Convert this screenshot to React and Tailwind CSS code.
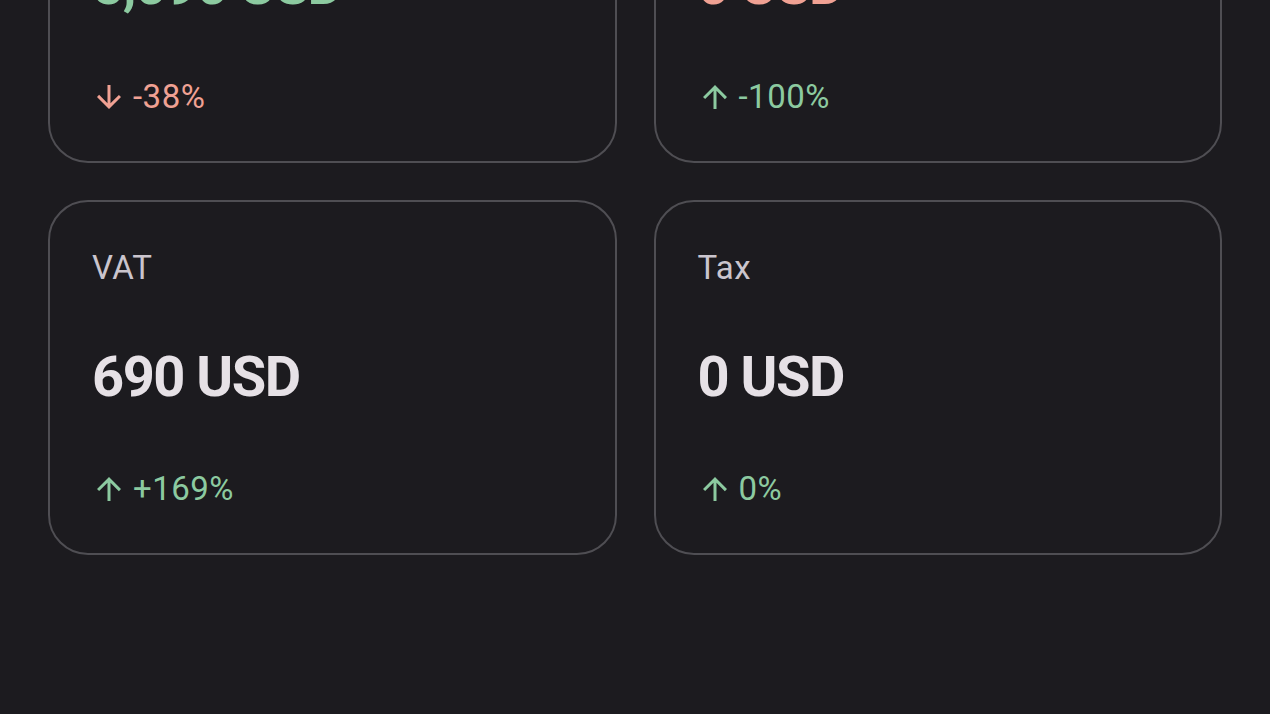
import React from "react";

const cards = [
  { label: "Income", value: "5,090 USD", valueTone: "green", delta: "-38%", dir: "down", deltaTone: "red" },
  { label: "Expenses", value: "0 USD", valueTone: "red", delta: "-100%", dir: "up", deltaTone: "green" },
  { label: "VAT", value: "690 USD", valueTone: "plain", delta: "+169%", dir: "up", deltaTone: "green" },
  { label: "Tax", value: "0 USD", valueTone: "plain", delta: "0%", dir: "up", deltaTone: "green" },
];

const toneClass = {
  green: "text-[#8ccaa0]",
  red: "text-[#f0a193]",
  plain: "text-[#e6e1e6]",
};

function Arrow({ dir }) {
  return (
    <svg viewBox="0 0 24 24" className="w-[36px] h-[36px]" fill="currentColor">
      {dir === "up" ? (
        <path d="M4 12l1.41 1.41L11 7.83V20h2V7.83l5.58 5.59L20 12l-8-8-8 8z" />
      ) : (
        <path d="M20 12l-1.41-1.41L13 16.17V4h-2v12.17l-5.58-5.59L4 12l8 8 8-8z" />
      )}
    </svg>
  );
}

function StatCard({ card }) {
  return (
    <div className="h-[355px] rounded-[40px] border-2 border-[#4f4e53] pl-[42px] pt-[46px] flex flex-col">
      <div className="h-[40px] flex items-center text-[33px] tracking-[0.5px] text-[#cac5cd]">{card.label}</div>
      <div className={`mt-[54px] h-[70px] flex items-center text-[56px] font-bold tracking-[-1.5px] ${toneClass[card.valueTone]}`}>
        {card.value}
      </div>
      <div className={`mt-[57px] h-[40px] flex items-center gap-[6px] text-[33px] tracking-[0.5px] ${toneClass[card.deltaTone]}`}>
        <span className="-ml-[1px]">
          <Arrow dir={card.dir} />
        </span>
        <span>{card.delta}</span>
      </div>
    </div>
  );
}

export default function App() {
  return (
    <div className="w-[1270px] h-[714px] overflow-hidden bg-[#1c1b1f]" style={{ fontFamily: "Roboto, 'Noto Sans', sans-serif" }}>
      <div className="-mt-[192px] px-12 grid grid-cols-2 gap-x-[37px] gap-y-[37px]">
        {cards.map((c) => (
          <StatCard key={c.label} card={c} />
        ))}
      </div>
    </div>
  );
}
